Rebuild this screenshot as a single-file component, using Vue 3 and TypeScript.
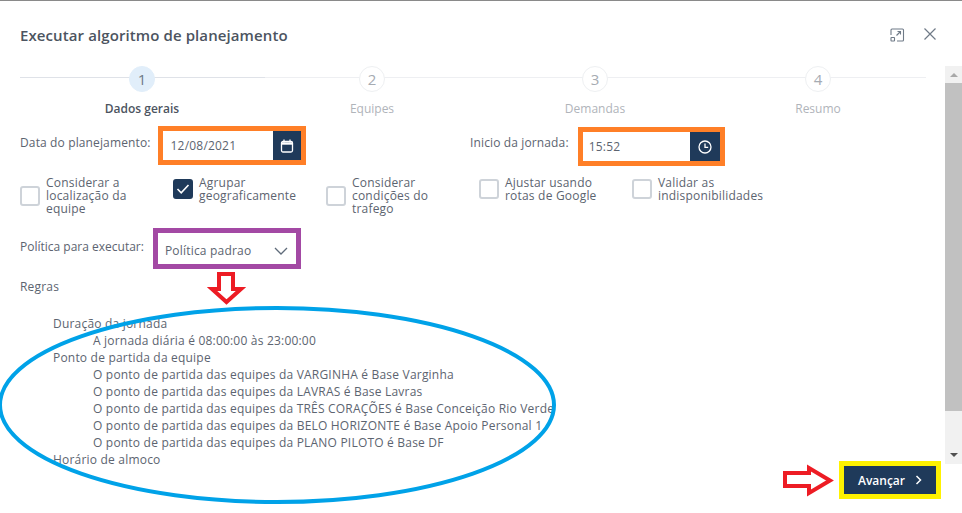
<script setup lang="ts">
const steps = [
  { n: 1, label: 'Dados gerais', active: true },
  { n: 2, label: 'Equipes', active: false },
  { n: 3, label: 'Demandas', active: false },
  { n: 4, label: 'Resumo', active: false }
]

const options = [
  { label: 'Considerar a localização da equipe', checked: false },
  { label: 'Agrupar geograficamente', checked: true },
  { label: 'Considerar condições do trafego', checked: false },
  { label: 'Ajustar usando rotas de Google', checked: false },
  { label: 'Validar as indisponibilidades', checked: false }
]

const bases = [
  'VARGINHA é Base Varginha',
  'LAVRAS é Base Lavras',
  'TRÊS CORAÇÕES é Base Conceição Rio Verde',
  'BELO HORIZONTE é Base Apoio Personal 1',
  'PLANO PILOTO é Base DF'
]
</script>

<template>
  <div class="modal">
    <header class="head">
      <h1>Executar algoritmo de planejamento</h1>
      <div class="head-icons">
        <svg width="16" height="16" viewBox="0 0 16 16" fill="none" stroke="#6f7a87" stroke-width="1.1">
          <path d="M6 2H13.5a1 1 0 0 1 1 1V13a1 1 0 0 1-1 1H8" />
          <path d="M2 8V3a1 1 0 0 1 1-1H6" />
          <rect x="2" y="10.5" width="3.5" height="3.5" rx=".5" />
          <path d="M7.5 8.5 11.5 4.5M8.5 4.5h3v3" />
        </svg>
        <svg width="14" height="14" viewBox="0 0 14 14" fill="none" stroke="#6f7a87" stroke-width="1.2">
          <path d="M1.5 1.5 12.5 12.5M12.5 1.5 1.5 12.5" />
        </svg>
      </div>
    </header>

    <div class="body">
      <div class="content">
        <div class="stepper">
          <div v-for="s in steps" :key="s.n" class="step" :class="{ active: s.active }">
            <span class="circle">{{ s.n }}</span>
            <span class="step-label">{{ s.label }}</span>
          </div>
        </div>

        <div class="dates">
          <div class="date-col">
            <label>Data do planejamento:</label>
            <div class="field orange">
              <span class="value">12/08/2021</span>
              <span class="addon">
                <svg width="14" height="14" viewBox="0 0 14 14" fill="none" stroke="#fff" stroke-width="1.3">
                  <rect x="1.5" y="2.5" width="11" height="10.5" rx="1.5" />
                  <path d="M4 .5V3.5M10 .5V3.5" />
                  <path d="M1.5 4.5h11" stroke-width="2.4" />
                </svg>
              </span>
            </div>
          </div>
          <div class="date-col second">
            <label>Inicio da jornada:</label>
            <div class="field orange wide">
              <span class="value">15:52</span>
              <span class="addon clock">
                <svg width="14" height="14" viewBox="0 0 14 14" fill="none" stroke="#fff" stroke-width="1.3">
                  <circle cx="7" cy="7" r="6" />
                  <path d="M7 3.5V7.3H10.2" />
                </svg>
              </span>
            </div>
          </div>
        </div>

        <div class="options">
          <div v-for="o in options" :key="o.label" class="option">
            <span class="box" :class="{ checked: o.checked }">
              <svg v-if="o.checked" width="14" height="12" viewBox="0 0 14 12" fill="none" stroke="#fff" stroke-width="1.6">
                <path d="M1.5 6 5.2 9.8 12.5 2" />
              </svg>
            </span>
            <span class="option-label">{{ o.label }}</span>
          </div>
        </div>

        <div class="policy">
          <label>Política para executar:</label>
          <div class="select">
            <span>Política padrao</span>
            <svg width="14" height="8" viewBox="0 0 14 8" fill="none" stroke="#5f6b7a" stroke-width="1.3">
              <path d="M1 1 7 7 13 1" />
            </svg>
          </div>
        </div>

        <div class="rules-title">Regras</div>
        <ul class="rules">
          <li>Duração da jornada</li>
          <li class="sub">A jornada diária é 08:00:00 às 23:00:00</li>
          <li>Ponto de partida da equipe</li>
          <li v-for="b in bases" :key="b" class="sub">O ponto de partida das equipes da {{ b }}</li>
          <li>Horário de almoco</li>
        </ul>
      </div>

      <div class="scrollbar">
        <span class="tri up"></span>
        <span class="thumb"></span>
        <span class="tri down"></span>
      </div>
    </div>

    <footer class="foot">
      <button class="next">
        Avançar
        <svg width="7" height="10" viewBox="0 0 7 10" fill="none" stroke="#fff" stroke-width="1.5">
          <path d="M1.5 1 5.5 5 1.5 9" />
        </svg>
      </button>
    </footer>

    <!-- marcacoes desenhadas por cima do print -->
    <svg class="marks" width="962" height="513" viewBox="0 0 962 513" fill="none">
      <ellipse cx="277" cy="405" rx="277" ry="97" stroke="#00a2e8" stroke-width="4" />
      <path d="M219 274H233V289H241L226.500 302 212 289H219Z" fill="#fff" stroke="#ed1c24" stroke-width="4" />
      <path d="M785 473H809V468L830 480.500 809 493V486H785Z" fill="#fff" stroke="#ed1c24" stroke-width="4" />
    </svg>
  </div>
</template>

<style>
html,
body {
  margin: 0;
  background: #fff;
}
</style>

<style scoped>
.modal {
  position: relative;
  width: 962px;
  height: 513px;
  overflow: hidden;
  background: #fff;
  border-top: 1px solid #8a8a8a;
  box-sizing: border-box;
  display: flex;
  flex-direction: column;
  font-family: "Open Sans", "Noto Sans", sans-serif;
  font-size: 12px;
  letter-spacing: .2px;
  color: #5c6470;
}

.modal::before {
  content: '';
  position: absolute;
  left: 0;
  top: -1px;
  width: 42px;
  height: 1px;
  background: #1f3a5a;
}

.head {
  height: 65px;
  flex: none;
  display: flex;
  justify-content: space-between;
  padding: 24px 25px 0 20px;
  box-sizing: border-box;
}

.head h1 {
  margin: 0;
  font-size: 15px;
  line-height: 20px;
  font-weight: 600;
  letter-spacing: .1px;
  color: #4c5460;
}

.head-icons {
  display: flex;
  gap: 18px;
  align-items: flex-start;
  padding-top: 2px;
}

.body {
  height: 398px;
  flex: none;
  display: flex;
}

.content {
  flex: 1;
  padding-left: 20px;
}

.stepper {
  display: grid;
  grid-template-columns: 244px 216px 230px 216px;
  width: 906px;
  letter-spacing: 0;
  background:
    linear-gradient(#dfe2e8, #dfe2e8) 0 11px / 245px 1px no-repeat,
    linear-gradient(#eeeff2, #eeeff2) 0 11px / 100% 1px no-repeat;
}

.step {
  display: flex;
  flex-direction: column;
  align-items: center;
  color: #b0b4ba;
}

.circle {
  width: 24px;
  height: 24px;
  border: 1px solid #eef0f2;
  border-radius: 50%;
  background: #fff;
  display: flex;
  align-items: center;
  justify-content: center;
  font-size: 15px;
  color: #a6abb2;
}

.step-label {
  margin-top: 8px;
  line-height: 17px;
}

.step.active {
  color: #4c5460;
  font-weight: 600;
}

.step.active .circle {
  background: #e1eefa;
  border-color: #e1eefa;
  color: #6f7a87;
  font-weight: 400;
}

.dates {
  display: flex;
  margin-top: 9px;
  height: 40px;
}

.date-col {
  display: flex;
  gap: 7px;
  width: 450px;
}

.date-col label {
  letter-spacing: .13px;
}

.date-col label,
.policy label {
  line-height: 17px;
  padding-top: 8px;
}

.field {
  display: flex;
  box-sizing: border-box;
  border: 5px solid #ff7f27;
  width: 148px;
  height: 39px;
}

.field.wide {
  width: 147px;
  margin-left: 2px;
  margin-top: 1px;
}

.value {
  flex: 1;
  padding: 6px 0 0 8px;
  line-height: 17px;
}

.wide .value {
  padding-left: 6px;
}

.addon {
  flex: none;
  width: 28px;
  background: #1f3a5a;
  display: flex;
  align-items: center;
  justify-content: center;
}

.addon.clock {
  width: 30px;
}

.options {
  display: flex;
  margin-top: 10px;
  height: 42px;
}

.option {
  width: 153px;
  display: flex;
  align-items: center;
  gap: 6px;
  flex: none;
  height: fit-content;
}

.box {
  flex: none;
  box-sizing: border-box;
  width: 20px;
  height: 20px;
  border: 2px solid #ced3d9;
  border-radius: 3px;
  display: flex;
  align-items: center;
  justify-content: center;
}

.box.checked {
  background: #1f3a5a;
  border-color: #1f3a5a;
}

.option-label {
  width: 108px;
  line-height: 13px;
}

.policy {
  display: flex;
  gap: 9px;
  margin-top: 10px;
  height: 41px;
}

.policy label {
  padding-top: 10px;
  letter-spacing: 0;
}

.select {
  box-sizing: border-box;
  width: 148px;
  height: 41px;
  border: 5px solid #a349a4;
  display: flex;
  align-items: center;
  justify-content: space-between;
  padding: 4px 8px 0 7px;
}

.rules-title {
  margin-top: 9px;
  line-height: 17px;
}

.rules {
  list-style: none;
  margin: 20px 0 0;
  padding: 0 0 0 33px;
  line-height: 17px;
}

.rules .sub {
  padding-left: 40px;
}

.scrollbar {
  flex: none;
  width: 17px;
  background: #f1f1f1;
  display: flex;
  flex-direction: column;
  align-items: center;
}

.thumb {
  width: 100%;
  height: 328px;
  background: #c1c1c1;
}

.tri {
  width: 0;
  height: 0;
  border-left: 4px solid transparent;
  border-right: 4px solid transparent;
}

.tri.up {
  border-bottom: 4px solid #a8a8a8;
  margin: 7px 0 6px;
}

.tri.down {
  border-top: 4px solid #505050;
  margin-top: auto;
  margin-bottom: 7px;
}

.foot {
  flex: 1;
  display: flex;
  justify-content: flex-end;
  padding-right: 21px;
}

.next {
  box-sizing: border-box;
  width: 102px;
  height: 38px;
  margin-top: -3px;
  border: 5px solid #fff200;
  background: #1f3a5a;
  color: #fff;
  font: 600 12px "Open Sans", "Noto Sans", sans-serif;
  display: flex;
  align-items: center;
  justify-content: center;
  gap: 10px;
  position: relative;
  z-index: 1;
}

.marks {
  position: absolute;
  left: 0;
  top: -1px;
  pointer-events: none;
}
</style>
